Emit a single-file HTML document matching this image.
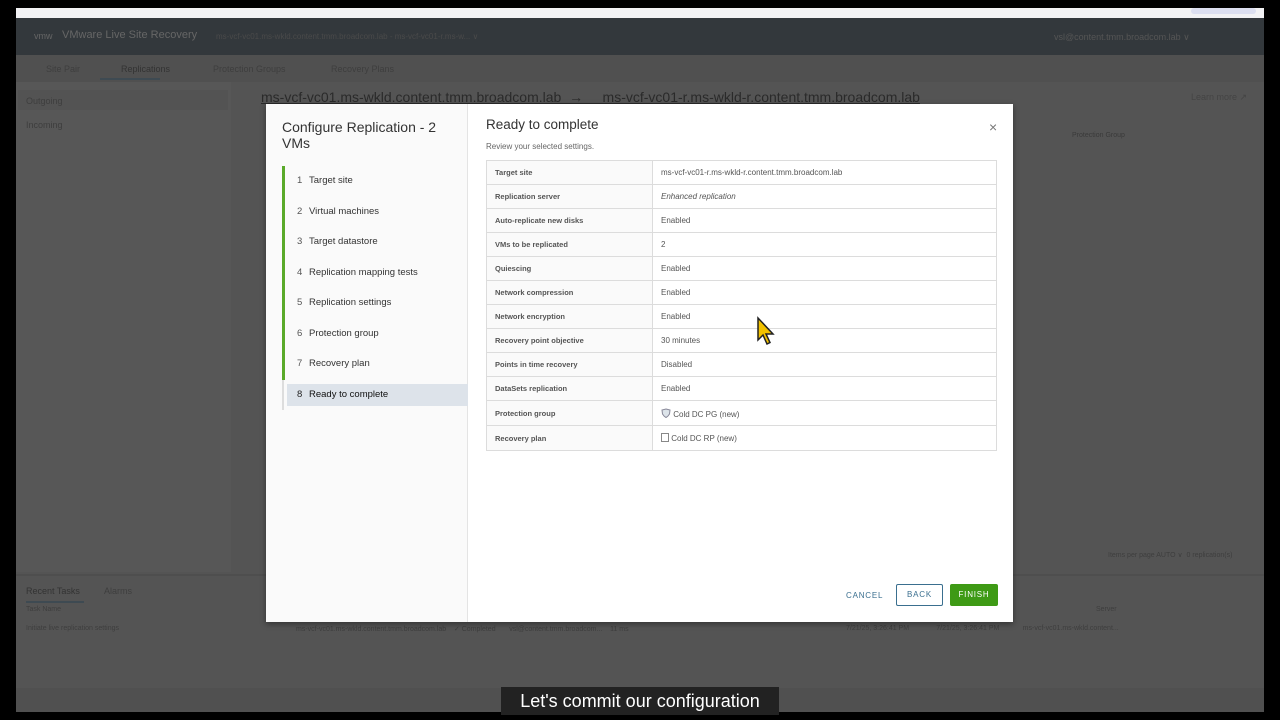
<!DOCTYPE html>
<html><head><meta charset="utf-8"><style>
*{box-sizing:border-box;margin:0;padding:0}
body{width:1280px;height:720px;background:#000;font-family:"Liberation Sans",sans-serif;position:relative;overflow:hidden}
.abs{position:absolute}
.page{left:16px;top:8px;width:1248px;height:704px;background:#545454}
.t{color:#3e3e3e;font-size:9px;position:absolute;white-space:nowrap}
.modal{left:266px;top:104px;width:747px;height:518px;background:#fff;box-shadow:0 2px 6px rgba(0,0,0,.4)}
.left{left:0;top:0;width:202px;height:518px;background:#fafafa;border-right:1px solid #e4e4e4}
.step{position:absolute;left:31px;font-size:9.5px;color:#333;white-space:nowrap}
.step b{font-weight:normal;display:inline-block;width:12px;color:#555}
table{border-collapse:collapse;position:absolute;left:220px;top:56px;width:511px}
td{border:1px solid #dcdcdc;height:24px;font-size:8px;color:#555;padding-left:8px}
td:first-child{width:166px;background:#fafafa;font-weight:bold;font-size:7.5px;color:#555}
</style></head><body>
<div class="abs page">
 <div class="abs" style="left:0;top:0;width:1248px;height:10px;background:#f2f2f4"></div>
 <div class="abs" style="left:1175px;top:0;width:65px;height:6px;background:#dcdff0;border-radius:3px"></div>
 <div class="abs" style="left:0;top:10px;width:1248px;height:37px;background:#33383c"></div>
 <div class="t" style="left:18px;top:23px;font-size:9px;color:#666">vmw</div>
 <div class="t" style="left:46px;top:21px;font-size:11px;color:#666">VMware Live Site Recovery</div>
 <div class="t" style="left:200px;top:24px;font-size:8px;color:#4a4a4a">ms-vcf-vc01.ms-wkld.content.tmm.broadcom.lab - ms-vcf-vc01-r.ms-w... ∨</div>
 <div class="t" style="left:1038px;top:24px;font-size:9px;color:#555">vsl@content.tmm.broadcom.lab ∨</div>
 <div class="abs" style="left:0;top:47px;width:1248px;height:27px;background:#505050"></div>
 <div class="t" style="left:30px;top:56px">Site Pair</div>
 <div class="t" style="left:105px;top:56px;color:#333">Replications</div>
 <div class="abs" style="left:84px;top:70px;width:60px;height:2px;background:#3e4a52"></div>
 <div class="t" style="left:197px;top:56px">Protection Groups</div>
 <div class="t" style="left:315px;top:56px">Recovery Plans</div>
 <div class="abs" style="left:0;top:74px;width:215px;height:490px;background:#575757"></div>
 <div class="abs" style="left:2px;top:82px;width:210px;height:20px;background:#535353"></div>
 <div class="t" style="left:10px;top:88px">Outgoing</div>
 <div class="t" style="left:10px;top:112px">Incoming</div>
 <div class="t" style="left:245px;top:81px;font-size:14px;color:#2a2a2a;text-decoration:underline">ms-vcf-vc01.ms-wkld.content.tmm.broadcom.lab &nbsp;→ &nbsp;&nbsp;&nbsp; ms-vcf-vc01-r.ms-wkld-r.content.tmm.broadcom.lab</div>
 <div class="t" style="left:1175px;top:84px;color:#444">Learn more ↗</div>
 <div class="t" style="left:1056px;top:124px;font-size:7px;color:#3a3a3a">Protection Group</div>
 <div class="t" style="left:1092px;top:543px;font-size:7px">Items per page AUTO ∨ &nbsp;0 replication(s)</div>
 <div class="abs" style="left:0;top:566px;width:1248px;height:2px;background:#4e4e4e"></div>
 <div class="t" style="left:10px;top:578px;color:#333">Recent Tasks</div>
 <div class="t" style="left:88px;top:578px">Alarms</div>
 <div class="abs" style="left:10px;top:593px;width:58px;height:2px;background:#3e4a52"></div>
 <div class="t" style="left:10px;top:598px;font-size:7px">Task Name</div>
 <div class="t" style="left:1080px;top:598px;font-size:7px">Server</div>
 <div class="t" style="left:10px;top:617px;font-size:7px">Initiate live replication settings</div>
 <div class="t" style="left:280px;top:617px;font-size:7px">ms-vcf-vc01.ms-wkld.content.tmm.broadcom.lab &nbsp;&nbsp; ✓ Completed &nbsp;&nbsp;&nbsp;&nbsp;&nbsp; vsl@content.tmm.broadcom... &nbsp;&nbsp; 11 ms</div>
 <div class="t" style="left:830px;top:617px;font-size:7px">7/21/25, 3:26:41 PM &nbsp;&nbsp;&nbsp;&nbsp;&nbsp;&nbsp;&nbsp;&nbsp;&nbsp;&nbsp;&nbsp;&nbsp; 7/21/25, 3:26:41 PM &nbsp;&nbsp;&nbsp;&nbsp;&nbsp;&nbsp;&nbsp;&nbsp;&nbsp;&nbsp; ms-vcf-vc01.ms-wkld.content...</div>
 <div class="abs" style="left:0;top:680px;width:1248px;height:24px;background:#505050"></div>
</div>

<div class="abs modal">
 <div class="abs left">
  <div class="abs" style="left:16px;top:15px;font-size:14px;color:#333;line-height:16px;width:180px">Configure Replication - 2 VMs</div>
  <div class="abs" style="left:16px;top:62px;width:3px;height:214px;background:#5aaa2a"></div>
  <div class="abs" style="left:16px;top:276px;width:2px;height:30px;background:#ddd"></div>
  <div class="abs" style="left:21px;top:280px;width:181px;height:22px;background:#dde3ea"></div>
  <div class="step" style="top:71px"><b>1</b>Target site</div>
  <div class="step" style="top:102px"><b>2</b>Virtual machines</div>
  <div class="step" style="top:132px"><b>3</b>Target datastore</div>
  <div class="step" style="top:163px"><b>4</b>Replication mapping tests</div>
  <div class="step" style="top:193px"><b>5</b>Replication settings</div>
  <div class="step" style="top:224px"><b>6</b>Protection group</div>
  <div class="step" style="top:254px"><b>7</b>Recovery plan</div>
  <div class="step" style="top:285px;color:#111"><b style="color:#222">8</b>Ready to complete</div>
 </div>
 <div class="abs" style="left:220px;top:13px;font-size:13.5px;color:#333">Ready to complete</div>
 <div class="abs" style="left:220px;top:38px;font-size:8px;color:#666">Review your selected settings.</div>
 <div class="abs" style="left:723px;top:15px;font-size:14px;color:#777">×</div>
 <table>
  <tr><td>Target site</td><td>ms-vcf-vc01-r.ms-wkld-r.content.tmm.broadcom.lab</td></tr>
  <tr><td>Replication server</td><td><i>Enhanced replication</i></td></tr>
  <tr><td>Auto-replicate new disks</td><td>Enabled</td></tr>
  <tr><td>VMs to be replicated</td><td>2</td></tr>
  <tr><td>Quiescing</td><td>Enabled</td></tr>
  <tr><td>Network compression</td><td>Enabled</td></tr>
  <tr><td>Network encryption</td><td>Enabled</td></tr>
  <tr><td>Recovery point objective</td><td>30 minutes</td></tr>
  <tr><td>Points in time recovery</td><td>Disabled</td></tr>
  <tr><td>DataSets replication</td><td>Enabled</td></tr>
  <tr><td style="height:25px">Protection group</td><td><svg width="10" height="10" viewBox="0 0 10 10" style="vertical-align:-1px"><path d="M5 1 L9 2 L8.5 6 Q7 8.5 5 9.5 Q3 8.5 1.5 6 L1 2 Z" fill="#dde4ea" stroke="#889"/></svg> Cold DC PG (new)</td></tr>
  <tr><td style="height:25px">Recovery plan</td><td><span style="display:inline-block;width:8px;height:9px;border:1px solid #888;vertical-align:-1px"></span> Cold DC RP (new)</td></tr>
 </table>
 <div class="abs" style="left:580px;top:487px;font-size:8px;color:#3a6f8f;letter-spacing:.8px">CANCEL</div>
 <div class="abs" style="left:630px;top:480px;width:47px;height:22px;border:1px solid #3a6f8f;border-radius:2px;font-size:8px;color:#3a6f8f;text-align:center;line-height:20px;letter-spacing:.8px">BACK</div>
 <div class="abs" style="left:684px;top:480px;width:48px;height:22px;background:#3e9a15;border-radius:2px;font-size:8px;color:#fff;text-align:center;line-height:22px;letter-spacing:.8px">FINISH</div>
 <svg class="abs" style="left:490px;top:212px" width="22" height="30" viewBox="0 0 22 30"><path d="M2 2 L2 24 L7 19 L11 28 L14 26.5 L10 18 L17 18 Z" fill="#f2c200" stroke="#222" stroke-width="1.5"/></svg>
</div>
<div class="abs" style="left:501px;top:687px;width:278px;height:28px;background:#222;color:#fff;font-size:18px;text-align:center;line-height:28px">Let's commit our configuration</div>
</body></html>
